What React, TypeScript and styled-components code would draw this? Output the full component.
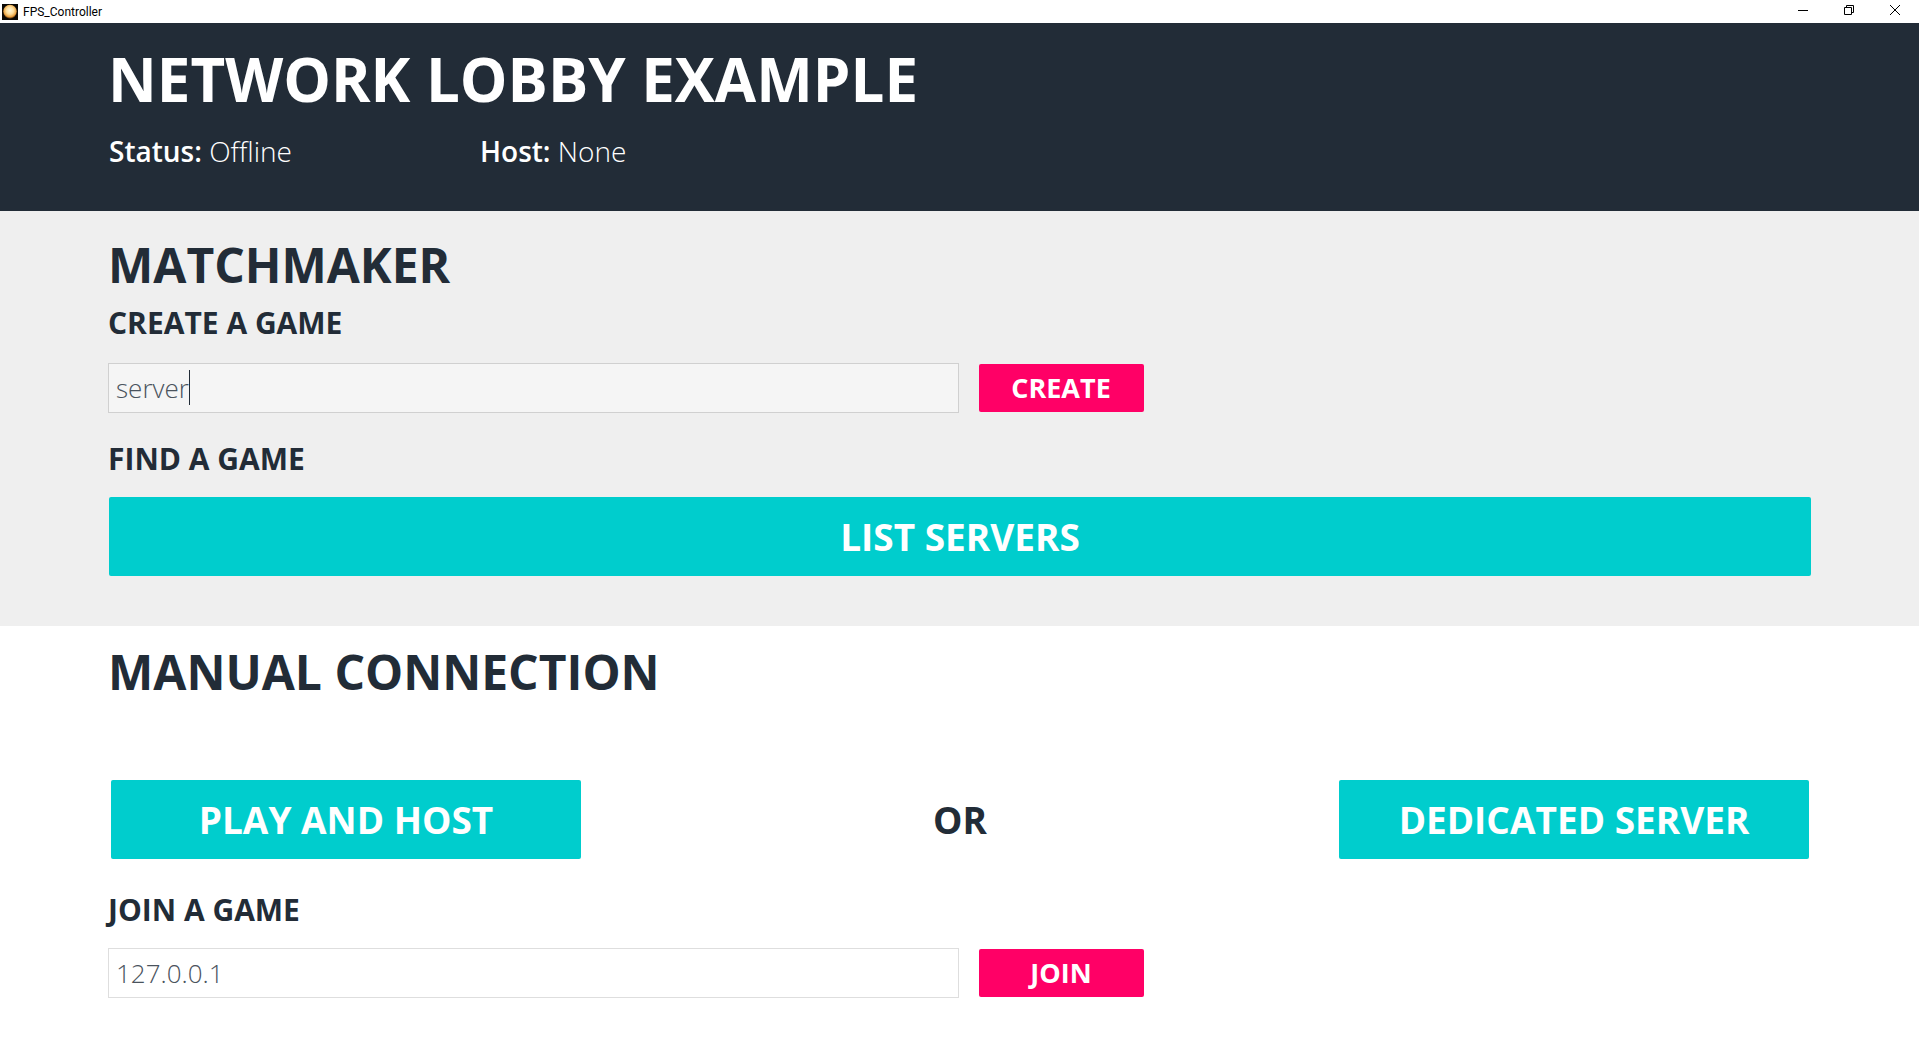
import React, { useLayoutEffect, useState } from 'react';
import styled, { createGlobalStyle } from 'styled-components';

const INK = '#222c37';
const FIELD_FONT = "300 26px 'Open Sans', sans-serif";

const Global = createGlobalStyle`
  * { box-sizing: border-box; }
  body { margin: 0; background: #fff; color: ${INK}; font-family: 'Open Sans', sans-serif; }
  h1, h2, h3, p { margin: 0; }
`;
const TitleBar = styled.header`
  display: flex; align-items: center; justify-content: space-between;
  height: 23px; padding: 0 1px 0 2px; background: #fff;
`;
const AppName = styled.div`
  display: flex; align-items: center; gap: 5px;
  font: 400 12px/16px Roboto, sans-serif; color: #000;
`;
const WindowButtons = styled.div`display: flex;`;
const WindowButton = styled.button`
  display: flex; align-items: center; justify-content: center;
  width: 46px; height: 23px; padding: 0 0 3px; border: 0; background: none;
`;
const Band = styled.section<{ $bg: string; $color?: string; $pad: string }>`
  background: ${p => p.$bg}; color: ${p => p.$color ?? INK}; padding: ${p => p.$pad};
`;
const Title = styled.h1`font-size: 60px; line-height: 72px; font-weight: 700;`;
const Heading = styled.h2`font-size: 48px; line-height: 60px; font-weight: 700;`;
const SubHeading = styled.h3<{ $above: number; $below: number }>`
  margin: ${p => p.$above}px 0 ${p => p.$below}px; font-size: 30px; line-height: 40px; font-weight: 700;
`;
const StatusRow = styled.div`
  display: grid; grid-template-columns: 371px 1fr; padding: 16px 0 0 1px;
  font-size: 28px; line-height: 40px; font-weight: 300;
`;
const StatusLabel = styled.strong`font-weight: 600;`;
const FieldRow = styled.form`display: flex; align-items: center; gap: 20px;`;
const FieldBox = styled.div`position: relative; width: calc(50% - 1px);`;
const Field = styled.input<{ $line: string }>`
  display: block; width: 100%; height: 50px; padding: 0 7px; border: 1px solid ${p => p.$line};
  border-radius: 0; background: rgba(255,255,255,.4); color: #4a535d; outline: 0;
  font: ${FIELD_FONT}; caret-color: transparent;
`;
const Caret = styled.span`
  position: absolute; top: 7px; width: 1px; height: 35px; background: ${INK}; pointer-events: none;
`;
const Button = styled.button<{ $kind?: 'small' | 'wide' }>`
  padding: 0; border: 0; border-radius: 2px; color: #fff;
  background: ${p => (p.$kind === 'small' ? '#ff0066' : '#00cdcd')};
  width: ${p => (p.$kind === 'small' ? '165px' : p.$kind === 'wide' ? '100%' : '470px')};
  height: ${p => (p.$kind === 'small' ? '48px' : '79px')};
  font: 700 ${p => (p.$kind === 'small' ? '27px' : '37px')}/48px 'Open Sans', sans-serif;
`;
const ListRow = styled.div`display: flex; padding-left: 1px;`;
const HostRow = styled.div`
  display: flex; align-items: center; justify-content: space-between; padding: 78px 2px 0 3px;
`;
const Or = styled.span`font-size: 37px; line-height: 48px; font-weight: 700;`;

function AppIcon() {
  return (
    <svg width="16" height="16" viewBox="0 0 16 16" aria-hidden="true">
      <defs>
        <radialGradient id="orb" cx="0.5" cy="0.42" r="0.55">
          <stop offset="0" stopColor="#fff6d8" />
          <stop offset="0.5" stopColor="#fddc98" />
          <stop offset="0.85" stopColor="#e8a040" />
          <stop offset="1" stopColor="#7a4510" />
        </radialGradient>
      </defs>
      <rect width="16" height="16" fill="#0a0805" />
      <circle cx="8" cy="7.6" r="6.8" fill="url(#orb)" />
    </svg>
  );
}

function TextField(props: {
  label: string; value: string; line: string; caret?: boolean; onChange: (v: string) => void;
}) {
  const [end, setEnd] = useState(0);
  useLayoutEffect(() => {
    const ctx = document.createElement('canvas').getContext('2d');
    if (!ctx) return;
    ctx.font = FIELD_FONT;
    setEnd(Math.round(ctx.measureText(props.value).width) + 8);
  }, [props.value]);
  return (
    <FieldBox>
      <Field
        aria-label={props.label}
        $line={props.line}
        value={props.value}
        onChange={e => props.onChange(e.target.value)}
      />
      {props.caret && <Caret style={{ left: end }} />}
    </FieldBox>
  );
}

export default function App() {
  const [server, setServer] = useState('server');
  const [address, setAddress] = useState('127.0.0.1');
  return (
    <>
      <Global />
      <TitleBar>
        <AppName><AppIcon />FPS_Controller</AppName>
        <WindowButtons>
          <WindowButton aria-label="Minimize">
            <svg width="10" height="10" viewBox="0 0 10 10"><path d="M0 5.5h10" stroke="#000" /></svg>
          </WindowButton>
          <WindowButton aria-label="Restore">
            <svg width="10" height="10" viewBox="0 0 10 10" fill="none" stroke="#000">
              <path d="M.5 2.5h7v7h-7zM2.5 2.5v-2h7v7h-2" />
            </svg>
          </WindowButton>
          <WindowButton aria-label="Close">
            <svg width="10" height="10" viewBox="0 0 10 10"><path d="M0 0l10 10M10 0L0 10" stroke="#000" /></svg>
          </WindowButton>
        </WindowButtons>
      </TitleBar>
      <main>
        <Band $bg={INK} $color="#fff" $pad="20px 108px 40px">
          <Title>NETWORK LOBBY EXAMPLE</Title>
          <StatusRow>
            <p><StatusLabel>Status:</StatusLabel> Offline</p>
            <p><StatusLabel>Host:</StatusLabel> None</p>
          </StatusRow>
        </Band>
        <Band $bg="#efefef" $pad="24px 108px 50px">
          <Heading>MATCHMAKER</Heading>
          <SubHeading $above={8} $below={20}>CREATE A GAME</SubHeading>
          <FieldRow>
            <TextField label="Server name" value={server} line="#d0d0d0" caret onChange={setServer} />
            <Button type="button" $kind="small">CREATE</Button>
          </FieldRow>
          <SubHeading $above={26} $below={18}>FIND A GAME</SubHeading>
          <ListRow><Button $kind="wide">LIST SERVERS</Button></ListRow>
        </Band>
        <Band $bg="#fff" $pad="16px 108px 40px">
          <Heading>MANUAL CONNECTION</Heading>
          <HostRow><Button>PLAY AND HOST</Button><Or>OR</Or><Button>DEDICATED SERVER</Button></HostRow>
          <SubHeading $above={31} $below={18}>JOIN A GAME</SubHeading>
          <FieldRow>
            <TextField label="Host address" value={address} line="#dedede" onChange={setAddress} />
            <Button type="button" $kind="small">JOIN</Button>
          </FieldRow>
        </Band>
      </main>
    </>
  );
}
